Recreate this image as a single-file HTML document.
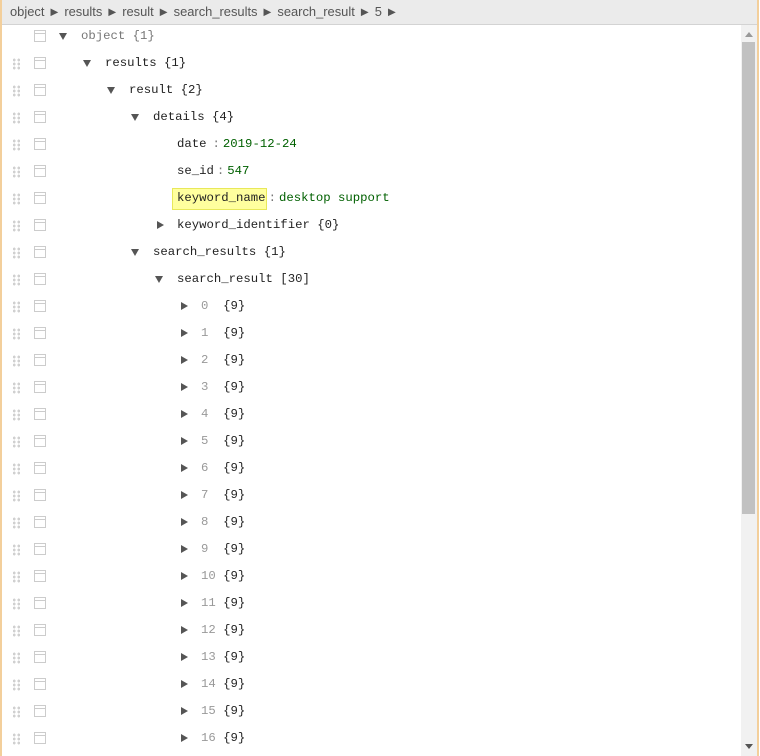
<!DOCTYPE html>
<html><head><meta charset="utf-8"><style>
*{margin:0;padding:0;box-sizing:border-box}
body{width:760px;height:756px;overflow:hidden;background:#fff;font-family:"Liberation Mono",monospace;position:relative}
.lb{position:absolute;left:0;top:0;width:2px;height:756px;background:#f3cf9b}
.rb{position:absolute;left:757px;top:0;width:2px;height:756px;background:#f3cf9b}
.bc{position:absolute;left:2px;top:0;width:755px;height:25px;background:#ebebeb;border-bottom:1px solid #d3d3d3;font-family:"Liberation Sans",sans-serif;font-size:12.9px;color:#555;line-height:24px;padding-left:8px;white-space:nowrap}
.sb{position:absolute;left:741px;top:25px;width:16px;height:731px;background:#f1f1f1}
.th{position:absolute;left:742px;top:42px;width:13px;height:472px;background:#c1c1c1}
.row{position:absolute;left:2px;height:27px;width:739px}
.dh{position:absolute;left:10px;top:8px;width:9px;height:12px;background:radial-gradient(circle,#d0d0d0 1.3px,transparent 1.5px) 0 0/4.5px 4px}
.cb{position:absolute;left:32px;top:7px;width:12px;height:12px;border:1px solid #ccc}
.cb::after{content:"";position:absolute;left:0;right:0;top:2px;height:1px;background:#ccc}
.td{position:absolute;top:10px;width:0;height:0;border-left:4.5px solid transparent;border-right:4.5px solid transparent;border-top:7px solid #555}
.tr{position:absolute;top:9px;width:0;height:0;border-top:4.5px solid transparent;border-bottom:4.5px solid transparent;border-left:7px solid #555}
.k{position:absolute;top:0;font-size:12.3px;line-height:27px;color:#222;white-space:pre}
.g{color:#777}.v{color:#006000}.i{color:#999}
.c{color:#777;margin:0 3px 0 3px}
.hl{position:absolute;left:172px;top:188px;width:95px;height:22px;background:#ffff9e;border:1px solid #e8e85a}
</style></head><body>
<div class="lb"></div><div class="rb"></div>
<div class="bc">object ► results ► result ► search_results ► search_result ► 5 ►</div>
<div class="hl"></div>
<div class="sb"></div><div class="th"></div>
<div style="position:absolute;left:745px;top:32px;width:0;height:0;border-left:4px solid transparent;border-right:4px solid transparent;border-bottom:5px solid #999"></div>
<div style="position:absolute;left:745px;top:744px;width:0;height:0;border-left:4px solid transparent;border-right:4px solid transparent;border-top:5px solid #555"></div>
<div id="r"></div>
<script>
var rows=[
[-1,'t',57,79,'<span class="g">object {1}</span>',1],
[0,'t',81,103,'results {1}'],
[0,'t',105,127,'result {2}'],
[0,'t',129,151,'details {4}'],
[0,'',0,175,'date<span class="c" style="margin-left:6px">:</span><span class="v">2019-12-24</span>'],
[0,'',0,175,'se_id<span class="c">:</span><span class="v">547</span>'],
[0,'',0,175,'keyword_name<span class="c">:</span><span class="v">desktop support</span>'],
[0,'r',155,175,'keyword_identifier {0}'],
[0,'t',129,151,'search_results {1}'],
[0,'t',153,175,'search_result [30]']];
for(var n=0;n<17;n++){rows.push([0,'r',179,199,'<span class="i">'+(n<10?n+' ':n)+'</span> {9}'])}
var h='';
rows.forEach(function(r,i){
var y=23+27*i;
h+='<div class="row" style="top:'+y+'px">';
if(r[0]==0)h+='<div class="dh"></div>';
h+='<div class="cb"></div>';
if(r[1]=='t')h+='<div class="td" style="left:'+r[2]+'px"></div>';
if(r[1]=='r')h+='<div class="tr" style="left:'+r[2]+'px"></div>';
h+='<span class="k" style="left:'+r[3]+'px">'+r[4]+'</span></div>';
});
document.getElementById('r').innerHTML=h;
</script>
</body></html>
